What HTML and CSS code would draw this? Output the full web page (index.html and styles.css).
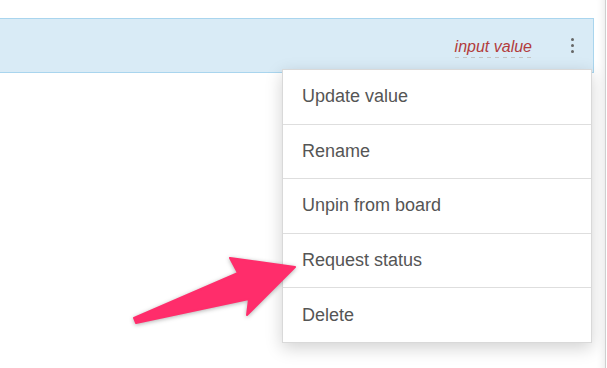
FILE: index.html
```html
<!DOCTYPE html>
<html lang="en">
<head>
    <meta charset="UTF-8">
    <title>Widget menu</title>
    <link rel="stylesheet" href="styles.css">
</head>
<body>
<div class="page">
    <div class="bar">
        <span class="value">input value</span>
        <button class="kebab" type="button" aria-label="More">
            <span></span><span></span><span></span>
        </button>
    </div>

    <!-- Dropdown opened from the kebab button -->
    <ul class="menu">
        <li>Update value</li>
        <li>Rename</li>
        <li>Unpin from board</li>
        <li>Request status</li>
        <li>Delete</li>
    </ul>

    <!-- Annotation arrow -->
    <svg class="arrow" width="607" height="368" viewBox="0 0 607 368">
        <polygon points="134,318 238,273 230,258 295,267 247,315 249,299 136,323"
                 fill="#ff2d6b" stroke="#ff2d6b" stroke-width="2" stroke-linejoin="round"/>
    </svg>
</div>
</body>
</html>
```

FILE: styles.css
```css
body {
    margin: 0;
    padding: 0;
    background-color: #ffffff;
    font-family: "Liberation Sans", Arial, sans-serif;
}

.page {
    position: relative;
    width: 606px;
    height: 368px;
    box-sizing: border-box;
    padding-top: 18px;
    border-right: 1px solid #cfcfcf;
    box-shadow: inset -10px 0 10px -10px rgba(0, 0, 0, 0.12);
    overflow: hidden;
}

.bar {
    display: flex;
    justify-content: flex-end;
    align-items: center;
    box-sizing: border-box;
    width: 595px;
    height: 55px;
    margin-left: -1px;
    padding-right: 11px;
    background-color: #d9ebf6;
    border: 1px solid #a9d5ee;
}

.value {
    display: inline-block;
    padding: 4px 0 2px;
    font-size: 16px;
    line-height: 18px;
    font-style: italic;
    color: #b23c3c;
    background-image: repeating-linear-gradient(to right, #c4c4c4 0, #c4c4c4 4px, transparent 4px, transparent 8px);
    background-size: 100% 1px;
    background-position: left bottom;
    background-repeat: no-repeat;
}

.kebab {
    display: flex;
    flex-direction: column;
    align-items: center;
    gap: 3px;
    width: 20px;
    margin-left: 30px;
    padding: 0;
    background: none;
    border: none;
    cursor: pointer;
}

.kebab span {
    width: 3px;
    height: 3px;
    border-radius: 50%;
    background-color: #666666;
}

.menu {
    position: absolute;
    left: 282px;
    top: 69px;
    width: 310px;
    box-sizing: border-box;
    margin: 0;
    padding: 0;
    list-style: none;
    background-color: #ffffff;
    border: 1px solid #d9d9d9;
    box-shadow: 0 5px 16px rgba(0, 0, 0, 0.18);
}

.menu li {
    display: flex;
    align-items: center;
    height: 53.6px;
    padding-left: 19px;
    font-size: 18px;
    color: #555555;
    cursor: pointer;
}

.menu li + li {
    border-top: 1px solid #dedede;
}

.arrow {
    position: absolute;
    left: 0;
    top: 0;
    pointer-events: none;
    filter: drop-shadow(0 1px 2px rgba(0, 0, 0, 0.3));
}
```
